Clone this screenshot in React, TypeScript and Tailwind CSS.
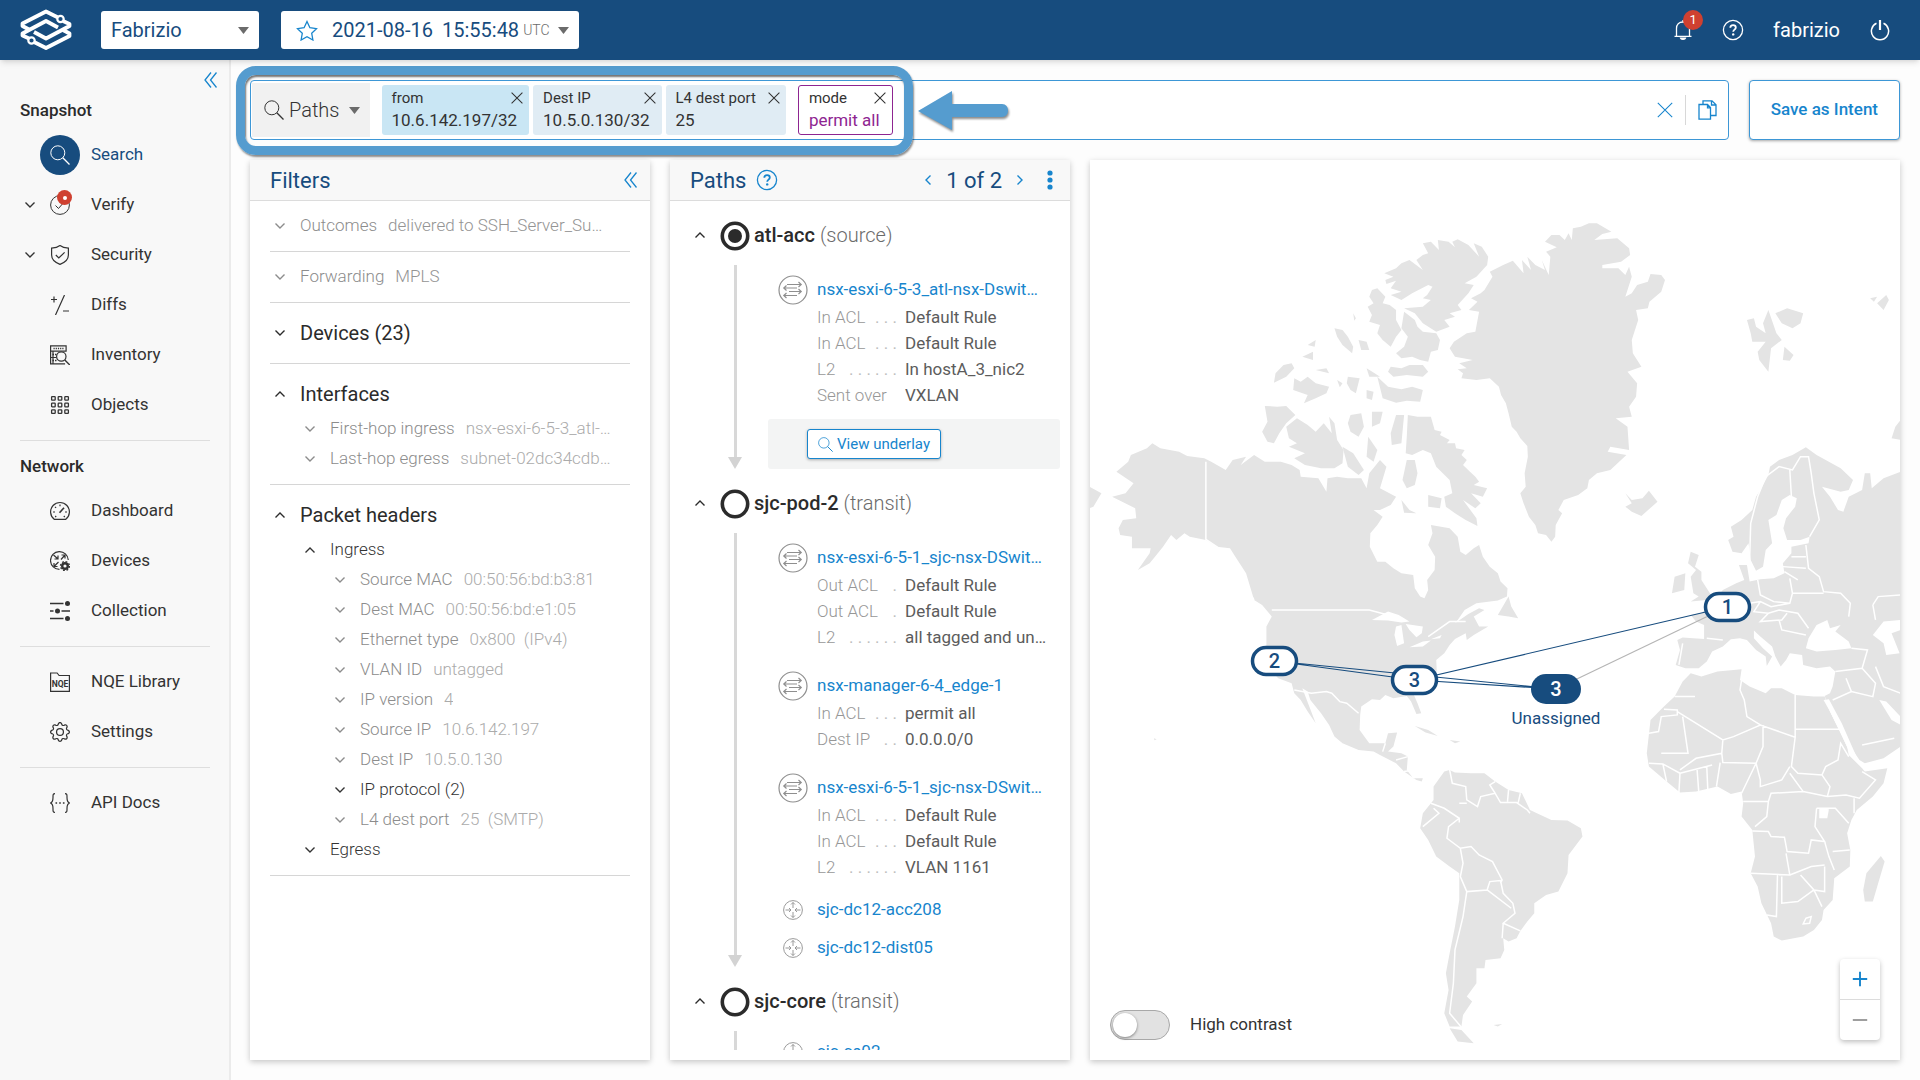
import { ReactNode, useState } from 'react';
import clsx from 'clsx';
import { BsGear } from 'react-icons/bs';

type IconProps = { size?: number; className?: string; children?: ReactNode };

function Svg({ size = 20, className, children }: IconProps) {
  return (
    <svg width={size} height={size} viewBox="0 0 20 20" fill="none" stroke="currentColor" className={clsx('shrink-0', className)} aria-hidden="true">
      {children}
    </svg>
  );
}

function SearchIcon(props: IconProps) {
  return (
    <Svg {...props}>
      <circle cx="7.8" cy="7.8" r="7" />
      <path d="M12.8 12.8 19.5 19.5" strokeWidth="1.3" />
    </Svg>
  );
}

function CloseIcon({ size = 12, className }: IconProps) {
  return (
    <Svg size={size} className={className}>
      <path d="M1 1 19 19M19 1 1 19" strokeWidth={21 / size} />
    </Svg>
  );
}

function Chevron({ up = false, className }: { up?: boolean; className?: string }) {
  return (
    <svg width="10" height="10" viewBox="0 0 10 10" fill="none" stroke="currentColor" strokeWidth="1.4" className={clsx('shrink-0', className)} aria-hidden="true">
      <path d={up ? 'M.5 7.5 5 3 9.5 7.5' : 'M.5 2.5 5 7 9.5 2.5'} />
    </svg>
  );
}

function Caret({ className }: { className?: string }) {
  return (
    <svg width="11" height="7" viewBox="0 0 11 7" className={clsx('shrink-0 fill-[#6b6b6b]', className)} aria-hidden="true">
      <path d="M0 0h11L5.5 7z" />
    </svg>
  );
}

function CollapseIcon() {
  return (
    <svg width="13" height="16" viewBox="0 0 13 16" fill="none" stroke="currentColor" strokeWidth="1.3" aria-hidden="true">
      <path d="M7 .5 1 8l6 7.5M12.5.5l-6 7.5 6 7.5" />
    </svg>
  );
}

function HelpIcon({ className }: { className?: string }) {
  return (
    <svg width="22" height="22" viewBox="0 0 22 22" className={clsx('shrink-0', className)} aria-hidden="true">
      <circle cx="11" cy="11" r="9.6" fill="none" stroke="currentColor" strokeWidth="1.3" />
      <path d="M8.3 8.8c0-1.700 1.200-2.700 2.800-2.700s2.700 1 2.700 2.400c0 2-2.600 2.200-2.600 4.200" fill="none" stroke="currentColor" strokeWidth="1.8" />
      <circle cx="11.2" cy="15.4" r="1.2" fill="currentColor" />
    </svg>
  );
}

function Logo() {
  return (
    <svg width="52" height="42" viewBox="0 0 52 42" fill="none" stroke="#fff" strokeWidth="3.8" strokeLinejoin="round" aria-label="Home">
      <path d="M37.5 8.200 26 2.500 2.500 14.500V17L9 20.500" />
      <path d="M14.500 33.300 26 39l23.500-12V24.500L43 21" />
      <path d="M43 12l6.500 3v2L26 29.500 14 23" />
      <path d="M9 29.500l-6.500-3v-2L26 12l12 6.500" />
      <circle cx="40.5" cy="10" r="3.2" strokeWidth="2.2" fill="#174c7e" />
      <circle cx="11.5" cy="31.5" r="3.2" strokeWidth="2.2" fill="#174c7e" />
    </svg>
  );
}

const navIcons: Record<string, ReactNode> = {
  Search: <SearchIcon />,
  Verify: (
    <Svg>
      <circle cx="10" cy="10" r="9.4" />
      <path d="m5.500 10.500 3 3 6-7" />
    </Svg>
  ),
  Security: (
    <Svg>
      <path d="M10 .6c2.500 1.900 5.400 2.400 8.400 2.500v7c0 4.500-3.400 7.500-8.400 9.300-5-1.800-8.400-4.800-8.400-9.300v-7c3-.1 5.900-.6 8.400-2.500Z" strokeWidth="1.2" />
      <path d="m5.800 10 3 3 5.800-5.600" strokeWidth="1.2" />
    </Svg>
  ),
  Diffs: (
    <Svg>
      <path d="M1 4.500h6M4 1.500v6M14.500 0 5.500 20M13 16h6" strokeWidth="1.2" />
    </Svg>
  ),
  Inventory: (
    <Svg>
      <path d="M.6.8h15.500v5.400H.6zM.6 6.200v12.600h14.500M.6 12.500h6M3 6.500v12" strokeWidth="1.2" />
      <path d="M3.500 3.500h10" strokeWidth="1.5" strokeDasharray="1.2 1" />
      <path d="M2.500 9.500h4M2.500 15.500h5" strokeWidth="1.5" strokeDasharray="1.5 1" />
      <circle cx="11.3" cy="11.5" r="4.7" fill="#f8f8f8" strokeWidth="1.2" />
      <path d="m14.800 15 5 5" strokeWidth="1.4" />
    </Svg>
  ),
  Objects: (
    <Svg>
      {[1.6, 8.2, 14.8].map((y) => [1.6, 8.2, 14.8].map((x) => <rect key={`${x}-${y}`} x={x} y={y} width="3.6" height="3.6" rx=".6" strokeWidth="1.3" />))}
    </Svg>
  ),
  Dashboard: (
    <Svg>
      <path d="M4.200 18.300a9.400 9.400 0 1 1 11.600 0Z" strokeWidth="1.2" />
      <path d="m9.500 11.800 4.500-5" strokeWidth="1.6" />
      <path d="M10 3.400v1.800M3 11h2M15 11h2M5 5.800l1.100 1.100M5.200 16l1-1M14.800 16l-1-1" strokeWidth="1.2" />
    </Svg>
  ),
  Devices: (
    <Svg>
      <path d="M9.500 18.400A8.900 8.900 0 1 1 18.300 9" strokeWidth="1.2" />
      <path d="m3.500 4 4.500 4M8 4.500V8H4.500M11 8.500l4-4.500M11.500 4H15v3.500M8.500 11 4 15.500M4 12v3.500h3.500" strokeWidth="1.2" />
      <circle cx="15" cy="15" r="2.8" strokeWidth="2.4" />
      <circle cx="15" cy="15" r="4.5" strokeWidth="1.3" strokeDasharray="1.8 1.73" />
    </Svg>
  ),
  Collection: (
    <Svg>
      <path d="M0 2.500h13.500M0 10h3.500M11.500 10H20M0 17.500h13.500" strokeWidth="1.3" />
      <g fill="currentColor" stroke="none">
        <circle cx="17.5" cy="2.5" r="2.5" />
        <circle cx="7.5" cy="10" r="2.5" />
        <circle cx="17.5" cy="17.5" r="2.5" />
      </g>
    </Svg>
  ),
  'NQE Library': (
    <Svg>
      <path d="M.6 1h6.500l2 2.500h10.300v15.900H.6Z" strokeWidth="1.2" />
      <text x="10" y="15" textAnchor="middle" fontSize="8.5" fontWeight="700" fill="currentColor" stroke="none">
        NQE
      </text>
    </Svg>
  ),
  Settings: <BsGear size={20} />,
  'API Docs': (
    <Svg>
      <path d="M5 .6C2.800.6 3 2 3 4.500S3 9 .6 10C3 11 3 13 3 15.500s-.2 3.900 2 3.900M15 .6c2.200 0 2 1.400 2 3.900S17 9 19.400 10C17 11 17 13 17 15.500s.2 3.900-2 3.900" strokeWidth="1.2" />
      <path d="M5.500 10h1.600M9.200 10h1.600M12.900 10h1.600" strokeWidth="1.7" />
    </Svg>
  ),
};

function NavItem({ label, active, expandable, alert }: { label: string; active?: boolean; expandable?: boolean; alert?: boolean }) {
  return (
    <a href="#" className={clsx('flex h-[50px] items-center', active ? 'text-[#174c7e]' : 'text-[#333]')}>
      <span className="flex w-10 justify-center pl-5">{expandable && <Chevron />}</span>
      <span className={clsx('relative grid size-10 place-items-center rounded-full', active && 'bg-[#174c7e] text-white')}>
        {navIcons[label]}
        {alert && (
          <span className="absolute top-[5px] right-2 grid size-[15px] place-items-center rounded-full bg-[#cf4030]">
            <span className="size-1 rounded-full bg-white" />
          </span>
        )}
      </span>
      <span className="pl-[11px]">{label}</span>
    </a>
  );
}

function Sidebar() {
  return (
    <nav className="flex w-[231px] shrink-0 flex-col border-r-2 border-[#ebebeb] bg-[#f8f8f8] pr-[19px] pl-5 text-[17px]">
      <div className="flex h-10 items-center justify-end">
        <button type="button" aria-label="Collapse menu" className="-mr-[7px] text-[#1785cd]">
          <CollapseIcon />
        </button>
      </div>
      <h2 className="mb-[10px] leading-5 font-medium text-[#2b2b2b]">Snapshot</h2>
      <div className="-ml-5">
        <NavItem label="Search" active />
        <NavItem label="Verify" expandable alert />
        <NavItem label="Security" expandable />
        <NavItem label="Diffs" />
        <NavItem label="Inventory" />
        <NavItem label="Objects" />
      </div>
      <hr className="my-[10px] border-[#dedede]" />
      <h2 className="mt-[5px] mb-[10px] leading-5 font-medium text-[#2b2b2b]">Network</h2>
      <div className="-ml-5">
        <NavItem label="Dashboard" />
        <NavItem label="Devices" />
        <NavItem label="Collection" />
      </div>
      <hr className="my-[10px] border-[#dedede]" />
      <div className="-ml-5">
        <NavItem label="NQE Library" />
        <NavItem label="Settings" />
      </div>
      <hr className="my-[10px] border-[#dedede]" />
      <div className="-ml-5">
        <NavItem label="API Docs" />
      </div>
    </nav>
  );
}

function Header() {
  return (
    <header className="relative z-10 flex h-[60px] shrink-0 items-center bg-[#174c7e] pr-[30px] pl-5 text-[20px] text-white shadow-md">
      <Logo />
      <div className="relative ml-[29px] flex items-center rounded-[3px] bg-white text-[#174c7e]">
        <select aria-label="Network" className="h-[38px] w-[158px] appearance-none pl-[10px] outline-none">
          <option>Fabrizio</option>
        </select>
        <Caret className="pointer-events-none absolute right-[10px]" />
      </div>
      <button type="button" className="ml-[22px] flex h-[38px] items-center rounded-[3px] bg-white pr-[10px] pl-[15px] text-[#174c7e]">
        <svg width="22" height="21" viewBox="0 0 22 21" fill="none" stroke="#1785cd" strokeWidth="1.3" aria-hidden="true">
          <path d="m11 1.500 2.900 6.200 6.600.9-4.800 4.700 1.200 6.700L11 16.700 5.100 20l1.200-6.700L1.500 8.600l6.600-.9z" />
        </svg>
        <span className="ml-[14px]">2021-08-16</span>
        <span className="ml-[9px]">15:55:48</span>
        <span className="ml-1 text-[14px] font-light text-[#6b6b6b]">UTC</span>
        <Caret className="ml-2" />
      </button>
      <div className="ml-auto flex items-center">
        <button type="button" aria-label="Notifications" className="relative">
          <svg width="20" height="22" viewBox="0 0 20 22" fill="none" stroke="currentColor" strokeWidth="1.3" aria-hidden="true">
            <path d="M1.500 17.300h17M3.500 17V9.500C3.500 5.500 6 3 10 3s6.500 2.500 6.500 6.500V17M10 3V1" />
            <path d="M7.500 19.200h5c-.4 1.600-4.600 1.600-5 0z" fill="currentColor" />
          </svg>
          <span className="absolute -top-[9px] -right-[10px] grid size-5 place-items-center rounded-full bg-[#cf4030] text-[13px]">1</span>
        </button>
        <button type="button" aria-label="Help" className="ml-[29px]">
          <HelpIcon />
        </button>
        <a href="#" className="ml-[29px]">
          fabrizio
        </a>
        <button type="button" aria-label="Log out" className="ml-[30px]">
          <svg width="20" height="22" viewBox="0 0 20 22" fill="none" stroke="currentColor" strokeWidth="1.5" aria-hidden="true">
            <path d="M6.500 4.300a8.600 8.600 0 1 0 7 0" />
            <path d="M10 1v10" strokeWidth="2.2" />
          </svg>
        </button>
      </div>
    </header>
  );
}

function Chip({ label, value, className, valueClass }: { label: string; value: string; className: string; valueClass?: string }) {
  return (
    <div className={clsx('flex h-[50px] flex-col justify-center rounded-[3px] pr-3 pb-[2px] pl-[10px] text-[#333]', className)}>
      <div className="flex items-center justify-between gap-3 text-[15px] leading-[22px]">
        {label}
        <button type="button" aria-label={`Remove ${label}`} className="-mr-[6px]">
          <CloseIcon />
        </button>
      </div>
      <div className={clsx('text-[17px] leading-[22px]', valueClass)}>{value}</div>
    </div>
  );
}

function SearchBar() {
  return (
    <div className="flex gap-5">
      <div className="relative flex h-[60px] flex-1 items-center rounded-[4px] border border-[#3d97d6] bg-white px-px">
        <button type="button" className="flex h-[54px] items-center bg-[#f1f1f1] pr-[10px] pl-[12px] text-[20px] font-light text-[#333]">
          <SearchIcon className="mr-[5px]" />
          Paths
          <Caret className="ml-[9px]" />
        </button>
        <div className="ml-3 flex gap-1">
          <Chip label="from" value="10.6.142.197/32" className="bg-[#c9e6f4]" />
          <Chip label="Dest IP" value="10.5.0.130/32" className="bg-[#e0ecf4]" />
          <Chip label="L4 dest port" value="25" className="bg-[#e0ecf4]" />
          <Chip label="mode" value="permit all" className="ml-2 border border-[#8e2591] bg-white" valueClass="text-[#8e2591]" />
        </div>
        <input type="text" aria-label="Search query" className="h-full min-w-0 flex-1 outline-none" />
        <button type="button" aria-label="Clear" className="text-[#1785cd]">
          <CloseIcon size={16} />
        </button>
        <span className="mx-3 h-[30px] w-px bg-[#d8d8d8]" />
        <button type="button" aria-label="Copy" className="mr-[9px] text-[#1785cd]">
          <Svg size={20}>
            <path d="M1 4.500h8.500l3 3v11.700H1zM9.500 4.500v3.300h3M5 4.500V.8h9l4 4v10.700h-5.500M13.500.8V5H18" strokeWidth="1.3" />
          </Svg>
        </button>

        {/* highlight around the query and its pointer */}
        <div className="pointer-events-none absolute -top-[15px] -left-[15px] h-[89px] w-[677px] rounded-[20px] border-[9px] border-[#559ccf] shadow-[1px_2px_2px_rgba(0,0,0,.45),inset_1px_2px_2px_rgba(0,0,0,.55)]" />
        <svg width="96" height="46" viewBox="0 0 96 46" className="pointer-events-none absolute top-[8px] left-[666px] drop-shadow-[1px_2px_1px_rgba(0,0,0,.45)]" aria-hidden="true">
          <path d="M1 22 35 2v13h50c4 0 6 3 6 6.500S89 28 85 28H35v13z" fill="#559ccf" />
        </svg>
      </div>
      <button type="button" className="h-[60px] rounded-[4px] border border-[#3d97d6] bg-white px-[21px] text-[17px] font-medium text-[#1785cd] shadow-[0_1px_3px_rgba(0,0,0,.35)]">
        Save as Intent
      </button>
    </div>
  );
}

const card = 'flex min-h-0 flex-col bg-white shadow-[0_2px_6px_rgba(0,0,0,.22)]';

function FilterRow({ label, value, level = 1, open, strong, title }: { label: string; value?: string; level?: number; open?: boolean; strong?: boolean; title?: boolean }) {
  return (
    <button
      type="button"
      className={clsx(
        'flex h-[30px] w-full items-center text-left',
        level === 1 && 'pl-[5px]',
        level === 2 && 'pl-[35px]',
        level === 3 && 'pl-[65px]',
        title ? 'text-[20px] text-[#2b2b2b]' : 'text-[17px] font-light',
        !title && (strong ? 'text-[#333]' : 'text-[#8c8c8c]'),
      )}
    >
      <Chevron up={open} className="mr-[15px]" />
      <span className="shrink-0">{label}</span>
      {value && <span className={clsx('ml-[11px] truncate', level === 1 ? 'text-[#949494]' : 'text-[#ababab]')}>{value}</span>}
    </button>
  );
}

const packetRows: { label: string; value?: string; strong?: boolean }[] = [
  { label: 'Source MAC', value: '00:50:56:bd:b3:81' },
  { label: 'Dest MAC', value: '00:50:56:bd:e1:05' },
  { label: 'Ethernet type', value: '0x800\u00a0 (IPv4)' },
  { label: 'VLAN ID', value: 'untagged' },
  { label: 'IP version', value: '4' },
  { label: 'Source IP', value: '10.6.142.197' },
  { label: 'Dest IP', value: '10.5.0.130' },
  { label: 'IP protocol (2)', strong: true },
  { label: 'L4 dest port', value: '25\u00a0 (SMTP)' },
];

function Filters() {
  return (
    <section className={clsx(card, 'w-[400px] shrink-0')}>
      <div className="flex h-[41px] shrink-0 items-center justify-between border-b border-[#dcdcdc] bg-[#f8f8f8] pr-[13px] pl-5">
        <h2 className="text-[22px] text-[#174c7e]">Filters</h2>
        <button type="button" aria-label="Collapse filters" className="text-[#1785cd]">
          <CollapseIcon />
        </button>
      </div>
      <div className="flex flex-col overflow-hidden px-5">
        <div className="border-b border-[#d6d6d6] py-[10px]">
          <FilterRow label="Outcomes" value="delivered to SSH_Server_Su…" />
        </div>
        <div className="border-b border-[#d6d6d6] py-[10px]">
          <FilterRow label="Forwarding" value="MPLS" />
        </div>
        <div className="border-b border-[#d6d6d6] py-[15px]">
          <FilterRow label="Devices (23)" title />
        </div>
        <div className="border-b border-[#d6d6d6] pt-[15px] pb-[10px]">
          <FilterRow label="Interfaces" title open />
          <div className="mt-[5px]">
            <FilterRow level={2} label="First-hop ingress" value="nsx-esxi-6-5-3_atl-…" />
            <FilterRow level={2} label="Last-hop egress" value="subnet-02dc34cdb…" />
          </div>
        </div>
        <div className="border-b border-[#d6d6d6] pt-[15px] pb-[10px]">
          <FilterRow label="Packet headers" title open />
          <div className="mt-[5px]">
            <FilterRow level={2} label="Ingress" open strong />
            {packetRows.map((row) => (
              <FilterRow key={row.label} level={3} {...row} />
            ))}
            <FilterRow level={2} label="Egress" strong />
          </div>
        </div>
      </div>
    </section>
  );
}

type Detail = { label: string; leader?: string; value: string };

function Device({ name, details }: { name: string; details?: Detail[] }) {
  return (
    <div className={clsx('px-[10px]', details ? 'py-[10px]' : 'py-1')}>
      <div className="flex h-[30px] items-center">
        <span className="grid w-[30px] shrink-0 place-items-center text-[#8f8f8f]">
          {details ? (
            <svg width="30" height="30" viewBox="0 0 30 30" fill="none" stroke="currentColor" aria-hidden="true">
              <circle cx="15" cy="15" r="14" strokeWidth="1.2" />
              <path d="M9 9.500h14M20.500 7l2.700 2.500-2.700 2.500M6 13h13M8.500 10.500 5.800 13l2.700 2.500M11 16.500h12M20.500 14l2.700 2.500-2.700 2.500M6 20.500h13M8.500 18l-2.700 2.500L8.500 23" strokeWidth="1.2" />
            </svg>
          ) : (
            <Svg>
              <circle cx="10" cy="10" r="9.4" strokeWidth=".9" />
              <path d="M10 8V2.500M8 4.500l2-2 2 2M10 12v5.500M8 15.500l2 2 2-2M2.500 10H8M6 8l2 2-2 2M17.500 10H12M14 8l-2 2 2 2" strokeWidth=".9" />
            </Svg>
          )}
        </span>
        <a href="#" className="ml-[9px] truncate text-[#1785cd]">
          {name}
        </a>
      </div>
      {details?.map((d, i) => (
        <div key={i} className="flex h-[26px] items-center pl-[39px]">
          <span className="flex w-20 shrink-0 justify-between whitespace-nowrap font-light text-[#979797]">
            {d.label}
            <span className="font-normal text-[#bdbdbd]">{d.leader}</span>
          </span>
          <span className="ml-2 truncate text-[#5c5c5c]">{d.value}</span>
        </div>
      ))}
    </div>
  );
}

function Hop({ name, role, source, last, children }: { name: string; role: string; source?: boolean; last?: boolean; children: ReactNode }) {
  return (
    <div className="shrink-0 pb-1">
      <div className="flex h-[60px] items-center text-[20px]">
        <button type="button" aria-label={`Toggle ${name}`} className="mr-[15px] ml-[25px] text-[#2b2b2b]">
          <Chevron up />
        </button>
        <svg width="30" height="30" viewBox="0 0 30 30" className="mt-[2px]" fill="none" stroke="#2b2b2b" aria-hidden="true">
          <circle cx="15" cy="15" r="12.7" strokeWidth="3.6" />
          {source && <circle cx="15" cy="15" r="7" fill="#2b2b2b" stroke="none" />}
        </svg>
        <h3 className="ml-1 text-[#6b6b6b]">
          <span className="font-medium text-[#2b2b2b]">{name}</span> <span className="font-light">({role})</span>
        </h3>
      </div>
      <div className="flex pr-[10px] pl-[50px]">
        <div className="flex w-[30px] shrink-0 flex-col items-center" aria-hidden="true">
          <span className="w-[3px] flex-1 bg-[#d8d8d8]" />
          {!last && (
            <svg width="14" height="12" viewBox="0 0 14 12" className="fill-[#d3d3d3]">
              <path d="M0 0h14L7 12z" />
            </svg>
          )}
        </div>
        <div className="ml-[18px] min-w-0 flex-1">{children}</div>
      </div>
    </div>
  );
}

const acl = (label: string, leader: string): Detail => ({ label, leader, value: 'Default Rule' });

function Paths() {
  return (
    <section className={clsx(card, 'w-[400px] shrink-0 pb-[10px]')}>
      <div className="flex h-[41px] shrink-0 items-center border-b border-[#dcdcdc] bg-[#f8f8f8] pr-[17px] pl-5 text-[22px] text-[#174c7e]">
        <h2>Paths</h2>
        <button type="button" aria-label="About paths" className="ml-[10px] text-[#1785cd]">
          <HelpIcon />
        </button>
        <button type="button" aria-label="Previous path" className="ml-auto text-[#1785cd]">
          <Chevron className="rotate-90" />
        </button>
        <span className="mx-[13px]">1 of 2</span>
        <button type="button" aria-label="Next path" className="text-[#1785cd]">
          <Chevron className="-rotate-90" />
        </button>
        <button type="button" aria-label="More" className="ml-[22px] text-[#1785cd]">
          <svg width="6" height="20" viewBox="0 0 6 20" fill="currentColor" aria-hidden="true">
            <circle cx="3" cy="3" r="2.6" />
            <circle cx="3" cy="10" r="2.6" />
            <circle cx="3" cy="17" r="2.6" />
          </svg>
        </button>
      </div>
      <div className="flex min-h-0 flex-1 flex-col overflow-hidden pt-1 text-[17px]">
        <Hop name="atl-acc" role="source" source>
          <Device
            name="nsx-esxi-6-5-3_atl-nsx-Dswit…"
            details={[acl('In ACL', '. . .'), acl('In ACL', '. . .'), { label: 'L2', leader: '. . . . . .', value: 'In hostA_3_nic2' }, { label: 'Sent over', value: 'VXLAN' }]}
          />
          <div className="flex h-[50px] items-center rounded-[3px] bg-[#f3f4f4] pl-[39px]">
            <button type="button" className="flex h-[30px] items-center gap-1 rounded-[3px] border border-[#1785cd] bg-white px-[10px] text-[15px] text-[#1785cd] shadow-[0_1px_3px_rgba(0,0,0,.3)]">
              <SearchIcon size={15} />
              View underlay
            </button>
          </div>
        </Hop>
        <Hop name="sjc-pod-2" role="transit">
          <Device name="nsx-esxi-6-5-1_sjc-nsx-DSwit…" details={[acl('Out ACL', '.'), acl('Out ACL', '.'), { label: 'L2', leader: '. . . . . .', value: 'all tagged and un…' }]} />
          <Device name="nsx-manager-6-4_edge-1" details={[{ label: 'In ACL', leader: '. . .', value: 'permit all' }, { label: 'Dest IP', leader: '. .', value: '0.0.0.0/0' }]} />
          <Device name="nsx-esxi-6-5-1_sjc-nsx-DSwit…" details={[acl('In ACL', '. . .'), acl('In ACL', '. . .'), { label: 'L2', leader: '. . . . . .', value: 'VLAN 1161' }]} />
          <Device name="sjc-dc12-acc208" />
          <Device name="sjc-dc12-dist05" />
        </Hop>
        <Hop name="sjc-core" role="transit" last>
          <div className="pt-[2px]">
            <Device name="sjc-ce02_–" />
          </div>
        </Hop>
      </div>
    </section>
  );
}

// Land outlines, north of the 600 line
const northLand = [
  'M880 225 868 245 890 262 870 275 878 290 875 345 862 300 868 330 850 315 835 290 842 330 825 300 828 340 808 302 790 315 765 335 770 350 755 390 748 400 730 415 742 425 726 450 745 455 738 515 722 520 698 545 690 565 700 590 733 600 708 610 722 625 705 628 715 640 712 655 740 660 765 655 782 680 786 705 795 730 800 760 806 800 815 815 822 835 835 858 836 890 830 940 832 980 822 1000 828 1030 838 1070 850 1095 855 1120 870 1125 880 1145 887 1130 888 1095 900 1060 893 1050 903 1020 930 1005 947 985 950 960 965 940 990 930 1010 900 1020 885 985 875 990 860 1025 870 1022 800 1000 775 1030 770 1025 740 1038 710 1040 670 1022 635 1048 620 1032 580 1030 540 1042 480 1038 450 1060 445 1063 425 1085 395 1092 360 1085 345 1065 342 1060 365 1040 375 1030 400 1018 410 1030 350 1025 320 1018 345 1005 325 975 325 975 315 1010 305 1027 285 1025 265 1003 235 960 240 975 222 992 215 965 190 950 190 935 200 920 205 918 240 912 220 905 240 895 225Z',
  'M640 250 650 280 640 285 628 300 640 330 615 300 600 310 590 325 568 340 585 350 570 360 572 372 590 362 580 385 600 395 580 405 600 420 620 400 650 375 658 380 648 405 640 415 655 420 640 440 605 445 625 460 640 490 665 515 690 500 680 480 700 470 690 460 712 450 705 435 725 400 735 375 718 370 740 350 760 315 762 290 750 260 735 250 745 290 725 255 705 238 695 245 700 262 688 245 668 240 670 270 655 245Z',
  'M545 390 540 410 548 430 537 440 545 465 540 485 560 495 555 520 565 540 580 560 590 530 600 510 590 480 590 450 578 435 565 430 570 410 555 385Z',
  'M605 455 625 480 630 500 640 515 665 520 672 540 668 570 655 575 650 605 635 600 620 590 600 595 590 580 605 560 612 530 600 505Z',
  'M580 620 600 625 615 615 640 615 650 635 640 650 610 645 585 650 575 635Z',
  'M555 650 575 680 600 688 620 680 640 690 635 725 610 722 590 728 565 715Z',
  'M475 505 490 510 500 530 510 560 508 580 490 555 480 530ZM425 555 440 540 438 560ZM415 590 435 575 435 600ZM395 610 400 625 385 650 362 668 365 640 380 615ZM510 460 515 475 512 482Z',
  'M400 655 412 665 425 650 440 670 465 680 460 700 440 715 418 730 425 705 398 690ZM440 630 460 625 465 640ZM500 650 522 655 515 700 505 690 498 670ZM520 540 535 545 540 570 525 570ZM535 625 550 640 560 650 540 650ZM535 690 548 695 545 720 535 715ZM480 660 490 670 485 682Z',
  'M345 738 368 740 385 738 402 765 385 790 372 820 362 850 350 845 340 815 350 785Z',
  'M405 775 385 800 390 835 405 850 390 860 420 880 400 895 420 915 450 925 475 925 490 910 492 870 480 840 475 790 465 770 470 820 455 790 440 815 425 795Z',
  'M505 765 525 760 530 800 520 830 505 815 500 790ZM545 755 565 755 560 790 545 800ZM538 830 555 870 548 905 535 890ZM590 765 605 765 600 850 582 855 580 820ZM490 860 510 880 530 930 520 945 500 920Z',
  'M612 765 630 770 655 770 662 810 675 815 672 825 690 840 685 850 700 850 702 865 718 870 712 885 722 900 715 915 728 935 738 950 745 965 735 975 760 985 752 1010 730 1000 748 1030 738 1045 715 1020 740 1075 742 1098 720 1080 700 1060 683 1040 680 1010 695 1000 690 960 665 920 655 880 640 870 620 885 608 880 610 830Z',
  'M610 900 625 900 630 940 625 975 610 985 602 960ZM650 1005 675 1015 672 1045 650 1040ZM600 1020 615 1050 628 1060 605 1058Z',
  'M90 905 95 885 125 865 135 850 150 865 185 875 200 888 232 895 245 905 272 930 285 900 310 890 300 915 325 885 345 905 375 905 395 915 410 930 412 950 445 955 460 995 462 955 480 950 500 955 525 955 535 985 540 940 560 900 572 920 560 985 590 1010 580 1035 560 1050 548 1050 565 1070 555 1095 542 1120 541 1160 555 1205 570 1205 585 1225 600 1240 622 1245 625 1285 635 1310 643 1315 650 1290 648 1260 662 1230 663 1190 650 1155 658 1120 655 1095 690 1105 705 1130 710 1175 720 1185 735 1165 745 1155 752 1190 765 1220 780 1240 785 1265 798 1285 797 1310 780 1322 740 1330 718 1350 705 1380 700 1390 725 1362 745 1345 755 1350 735 1370 745 1400 762 1400 735 1425 722 1440 720 1420 700 1437 690 1455 680 1480 665 1500 666 1535 640 1570 622 1600 630 1630 637 1660 628 1662 618 1625 610 1608 585 1615 570 1605 560 1620 545 1618 525 1640 523 1665 522 1710 540 1750 570 1750 575 1720 592 1718 585 1760 575 1775 600 1780 612 1790 610 1830 622 1855 640 1855 638 1865 628 1860 605 1835 590 1810 560 1785 548 1775 520 1770 490 1750 475 1730 465 1695 450 1660 430 1620 425 1595 415 1585 428 1640 440 1690 425 1655 412 1620 400 1600 395 1570 370 1555 350 1520 348 1485 348 1400 358 1370 340 1335 325 1320 310 1240 290 1190 280 1165 255 1160 235 1140 205 1130 195 1120 180 1140 170 1125 155 1160 140 1190 130 1210 108 1230 130 1180 132 1165 97 1165 97 1130 75 1125 72 1105 80 1080 105 1075 103 1045 60 1010 85 1000 100 970 68 935Z',
  'M17 980 40 1000 25 1040 17 1045ZM1018 1000 1030 1020 1050 1015 1062 992 1078 1025 1048 1068 1030 1055 1018 1040 1030 1030ZM780 1365 800 1310 805 1340 818 1375 800 1370Z',
  'M1245 480 1258 475 1262 500 1280 520 1275 490 1285 450 1300 520 1310 540 1290 565 1285 635 1268 600 1265 575 1280 545 1255 545 1252 520ZM1298 460 1320 445 1350 460 1345 490 1330 505 1310 490ZM1315 560 1332 585 1325 602 1312 600ZM1475 415 1488 410 1482 425ZM1488 430 1505 405 1510 420 1500 450ZM1532 780V840L1515 835 1522 800Z',
  'M1140 1175 1155 1185 1148 1220 1160 1235 1160 1260 1172 1290 1180 1310 1170 1320 1140 1325 1155 1310 1145 1300 1140 1250 1150 1230 1135 1210ZM1110 1250 1130 1240 1128 1290 1105 1300Z',
  'M1355 862 1375 885 1420 925 1443 960 1435 990 1420 995 1385 980 1400 1010 1415 1050 1425 1055 1435 1010 1460 990 1465 940 1475 940 1478 985 1500 955 1532 935V1720L1532 1760 1500 1795 1465 1810 1455 1800 1430 1740 1400 1650 1390 1608 1400 1600 1405 1580 1410 1535 1400 1520 1375 1525 1350 1515 1348 1485 1325 1480 1318 1500 1308 1520 1298 1490 1292 1460 1270 1430 1258 1412 1258 1435 1275 1465 1292 1490 1282 1518 1280 1490 1262 1470 1245 1440 1232 1435 1215 1438 1200 1460 1180 1475 1170 1505 1155 1525 1130 1525 1112 1515 1120 1470 1115 1440 1125 1433 1165 1437 1165 1395 1150 1385 1140 1365 1160 1360 1185 1320 1200 1290 1225 1270 1240 1260 1230 1215 1245 1215 1250 1265 1270 1258 1295 1255 1315 1240 1312 1210 1328 1180 1328 1160 1360 1150 1362 1130 1345 1140 1320 1140 1313 1105 1318 1075 1335 1040 1338 1015 1325 1005 1310 1020 1300 1065 1285 1080 1292 1150 1280 1170 1275 1220 1262 1232 1252 1200 1248 1150 1235 1180 1218 1175 1210 1140 1220 1130 1215 1100 1235 1080 1255 1050 1262 1010 1270 990 1285 945 1288 920 1305 900 1330 885Z',
];

const southLand = [
  'M690 510 700 518 730 520 755 520 775 545 800 570 825 580 840 630 860 645 880 660 910 662 935 685 938 710 912 765 910 820 893 875 870 885 848 910 848 940 835 965 822 993 815 1015 800 1025 790 1015 792 1050 785 1075 757 1080 755 1105 740 1105 740 1150 722 1190 732 1205 715 1245 712 1280 690 1280 680 1240 688 1170 683 1120 690 1060 700 980 708 900 708 820 690 800 665 770 650 720 635 685 640 640 660 600 660 560 680 515Z',
  'M690 1285 712 1290 735 1330 705 1325ZM772 1275 788 1272 780 1280ZM625 378 650 390 668 408 645 398ZM690 420 710 425 700 430ZM138 415 143 418 139 421Z',
  'M1140 220 1160 230 1190 215 1235 208 1232 240 1250 260 1280 280 1290 265 1310 265 1335 285 1370 290 1390 290 1400 335 1420 400 1432 440 1435 465 1460 505 1465 515 1507 505 1500 550 1480 590 1450 630 1440 660 1432 700 1438 750 1437 800 1408 835 1405 900 1388 930 1385 960 1370 990 1350 1010 1310 1022 1295 1010 1290 970 1272 910 1265 860 1252 820 1260 770 1255 690 1235 650 1238 610 1235 575 1215 582 1190 560 1150 575 1120 578 1095 545 1062 500 1058 460 1065 360 1090 320 1110 290 1125 245Z',
  'M1495 768 1502 785 1490 850 1480 905 1465 905 1462 870 1468 820Z',
];

// Lakes and inland seas, in the southern frame
const water = [
  'M545 60 575 35 595 45 615 65 600 68 575 62Z',
  'M590 80 600 75 605 130 592 138 587 105Z',
  'M608 72 640 80 638 100 628 112 615 90Z',
  'M615 142 640 125 655 122 640 140Z',
  'M655 118 675 105 672 115Z',
  'M1360 115 1375 75 1395 60 1400 85 1420 75 1410 95 1435 125 1440 145 1410 150 1375 155 1355 145Z',
  'M1480 105 1500 65 1532 60V90L1515 100 1530 160 1505 165 1500 130Z',
  'M1492 300 1505 305 1532 350V375L1515 360Z',
  'M1380 625 1398 628 1395 655 1380 655Z',
  'M1388 300 1398 298 1422 370 1455 490 1440 470 1420 400 1400 335Z',
];

const borders = [
  'M235 -415V-182L260 -155 285 -120 300 -60 325 0M358 30H540L575 45M650 110 690 65 720 65M400 270 432 280 460 275 470 280 485 305 498 310 520 340M565 455 570 430M590 480 612 470M605 515 625 510',
  'M690 510 695 550 720 560 722 600 742 620 748 590 775 580 765 555 775 545M775 580 785 608 815 608 835 630 840 640M800 570 798 605M822 580 818 608M655 610 680 625 708 655 708 668M640 680 670 640 660 625M708 610 722 610M708 655 688 680 685 715 710 745 730 740 745 765 770 785 788 840 785 850M710 745 715 790 710 830 722 875 760 870 765 845 785 842 790 880 808 910 812 940 790 970 822 993M760 870 805 925M722 875 715 950 700 1050 697 1150 690 1240 712 1282M790 970 788 1015',
  'M1110 290 1148 290M1090 328 1115 330V345L1085 350 1080 395 1062 400M1115 335 1200 420 1220 410 1270 375 1335 412M1125 350 1135 460H1085M1200 420 1198 460 1150 475 1120 510M1235 240 1232 270 1240 300 1245 350 1270 375M1335 285V415M1335 388H1420M1275 375 1275 440 1262 490 1200 488 1198 460M1335 412 1328 500 1340 520 1385 525 1392 500 1415 480 1420 430 1435 470M1262 490 1270 540 1270 560 1310 540 1325 500M1195 488 1188 560M1152 510 1155 575M1170 500 1172 572M1062 490 1088 492 1120 520 1118 578M1088 492 1095 545M1120 520 1180 495M1262 490 1235 580M1238 605 1285 605 1290 580 1350 575 1395 590 1430 585 1455 595 1485 540 1460 515M1325 520 1350 575M1385 525 1400 560 1395 590M1445 595 1445 640M1375 625H1410L1435 670M1285 605 1282 650 1260 680M1255 693 1285 695 1290 710 1315 712 1320 755 1360 760 1365 720 1390 725 1372 680 1375 625M1405 755 1437 750M1390 725 1398 770 1408 810M1252 820 1325 825 1318 760M1325 825 1365 800 1390 795M1302 825 1300 950 1282 945M1310 830V910L1340 905 1370 870 1345 825M1370 870 1390 875 1390 800M1370 870 1385 920M1355 955 1365 950 1362 970 1350 972Z',
  'M1250 -120 1252 -230 1265 -310 1280 -370 1305 -400 1330 -390 1345 -430 1360 -430 1365 -380 1370 -320 1380 -240 1362 -190M1325 -390 1328 -310M1328 -130H1355M1312 -100 1355 -95M1355 -165 1360 -95 1380 -70 1388 -25 1420 -20 1438 10 1435 50M1265 -60 1270 -15 1295 5 1325 10 1330 -20 1325 -65M1315 -85 1340 -60M1330 -20H1388M1250 10 1270 5 1290 20 1325 10M1270 5 1258 35 1285 40 1305 30 1340 40 1360 85M1285 40 1270 65 1310 60 1320 40M1305 60 1310 90 1355 105M1170 115 1200 120M1125 130 1118 195M1480 15 1490 -10 1532 -15M1480 15 1485 60M1410 215 1460 205 1470 150 1440 145M1460 205 1485 250 1480 290 1440 275 1405 300M1440 275 1430 235M1485 200 1500 260 1532 280M1460 435 1520 415',
];

const nodes = [
  { x: 1251, y: 646, label: '2' },
  { x: 1391, y: 665, label: '3' },
  { x: 1704, y: 592, label: '1' },
];

function WorldMap() {
  return (
    <svg viewBox="1090 160 810 900" preserveAspectRatio="xMidYMid slice" className="absolute inset-0 size-full" role="img" aria-label="Locations">
      <g transform="translate(1080 160) scale(.5357 .3333)" className="fill-[#e4e4e4]">
        {northLand.map((d) => (
          <path key={d} d={d} />
        ))}
        <g transform="translate(0 1320)">
          {southLand.map((d) => (
            <path key={d} d={d} />
          ))}
          {water.map((d) => (
            <path key={d} d={d} fill="#fff" />
          ))}
          {borders.map((d) => (
            <path key={d} d={d} fill="none" stroke="#fff" strokeWidth="1.5" vectorEffect="non-scaling-stroke" />
          ))}
        </g>
      </g>
      <g fill="none" stroke="#174c7e" strokeWidth="1.2">
        <path d="M1556 689 1727 607" stroke="#b5b5b5" />
        <path d="M1274 661 1556 689M1274 661 1415 680M1415 680 1556 689M1415 680 1727 607" />
      </g>
      <g fontSize="20" fontWeight="500" textAnchor="middle" className="fill-[#174c7e]">
        {nodes.map((n) => (
          <g key={n.x}>
            <rect x={n.x + 1.5} y={n.y + 1.5} width="44" height="27" rx="13.5" fill="#fff" stroke="#174c7e" strokeWidth="3.5" />
            <text x={n.x + 23.5} y={n.y + 22}>
              {n.label}
            </text>
          </g>
        ))}
        <rect x="1531" y="674" width="50" height="30" rx="15" />
        <text x="1556" y="696" fill="#fff">
          3
        </text>
        <text x="1556" y="724" fontSize="17" fontWeight="400">
          Unassigned
        </text>
      </g>
    </svg>
  );
}

function MapPanel() {
  const [contrast, setContrast] = useState(false);
  return (
    <section className={clsx(card, 'relative min-w-0 flex-1 overflow-hidden')}>
      <WorldMap />
      <div className="relative mt-auto flex items-end justify-between p-5">
        <label className="flex items-center gap-5 text-[17px] text-[#333]">
          <input
            type="checkbox"
            role="switch"
            checked={contrast}
            onChange={(e) => setContrast(e.target.checked)}
            className="h-[30px] w-[60px] appearance-none rounded-full border border-[#a8a8a8] bg-[#e2e2e2] p-[2px] before:block before:size-6 before:rounded-full before:bg-white before:shadow-[0_1px_3px_rgba(0,0,0,.45)] checked:bg-[#174c7e] checked:before:ml-auto"
          />
          High contrast
        </label>
        <div className="flex flex-col rounded-[4px] bg-white shadow-[0_2px_5px_rgba(0,0,0,.25)]">
          <button type="button" aria-label="Zoom in" className="grid h-[41px] w-10 place-items-center border-b border-[#dcdcdc] text-[#1785cd]">
            <Svg size={16}>
              <path d="M10 1v18M1 10h18" strokeWidth="2.4" />
            </Svg>
          </button>
          <button type="button" aria-label="Zoom out" className="grid h-10 w-10 place-items-center text-[#9a9a9a]">
            <Svg size={16}>
              <path d="M1 10h18" strokeWidth="2.4" />
            </Svg>
          </button>
        </div>
      </div>
    </section>
  );
}

export default function App() {
  return (
    <div className="flex h-screen flex-col overflow-hidden bg-white font-[Roboto,'Liberation_Sans',sans-serif]">
      <Header />
      <div className="flex min-h-0 flex-1">
        <Sidebar />
        <main className="flex min-w-0 flex-1 flex-col gap-5 bg-[#fdfdfd] py-5 pr-5 pl-[19px]">
          <SearchBar />
          <div className="flex min-h-0 flex-1 gap-5">
            <Filters />
            <Paths />
            <MapPanel />
          </div>
        </main>
      </div>
    </div>
  );
}
